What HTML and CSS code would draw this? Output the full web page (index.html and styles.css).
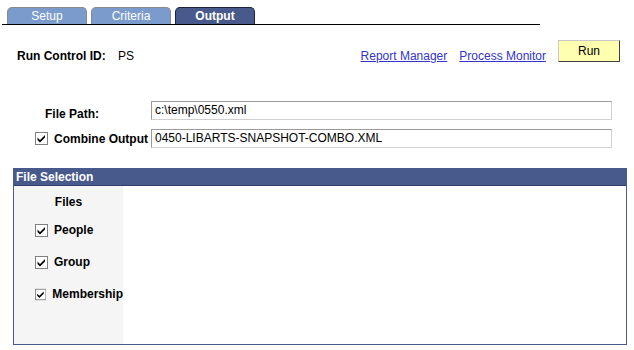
FILE: index.html
```html
<!DOCTYPE html>
<html lang="en">
<head>
    <meta charset="UTF-8">
    <title>Output</title>
    <link rel="stylesheet" href="styles.css">
</head>
<body>

    <div class="tabbar">
        <div class="tab">Setup</div>
        <div class="tab">Criteria</div>
        <div class="tab active">Output</div>
    </div>

    <div class="run-row">
        <span class="label run-label">Run Control ID:</span>
        <span class="value">PS</span>
        <a class="link" href="#">Report Manager</a>
        <a class="link" href="#">Process Monitor</a>
        <button class="run-btn">Run</button>
    </div>

    <div class="form">
        <div class="form-row">
            <span class="label path-label">File Path:</span>
            <div class="input">c:\temp\0550.xml</div>
        </div>
        <div class="form-row">
            <span class="check-label">
                <svg class="check" width="13" height="13" viewBox="0 0 13 13">
                    <rect x="0.5" y="0.5" width="12" height="12" fill="#fff" stroke="#808080"/>
                    <path d="M2.5 5.5 L5 8 L10 3 L10 5.5 L5 10.5 L2.5 8 Z" fill="#000"/>
                </svg>
                <span class="label">Combine Output</span>
            </span>
            <div class="input">0450-LIBARTS-SNAPSHOT-COMBO.XML</div>
        </div>
    </div>

    <div class="panel">
        <div class="panel-head">File Selection</div>
        <div class="panel-body">
            <div class="files-col">
                <div class="label files-title">Files</div>
                <div class="file-item">
                    <svg class="check" width="13" height="13" viewBox="0 0 13 13">
                        <rect x="0.5" y="0.5" width="12" height="12" fill="#fff" stroke="#808080"/>
                        <path d="M2.5 5.5 L5 8 L10 3 L10 5.5 L5 10.5 L2.5 8 Z" fill="#000"/>
                    </svg>
                    <span class="label">People</span>
                </div>
                <div class="file-item">
                    <svg class="check" width="13" height="13" viewBox="0 0 13 13">
                        <rect x="0.5" y="0.5" width="12" height="12" fill="#fff" stroke="#808080"/>
                        <path d="M2.5 5.5 L5 8 L10 3 L10 5.5 L5 10.5 L2.5 8 Z" fill="#000"/>
                    </svg>
                    <span class="label">Group</span>
                </div>
                <div class="file-item">
                    <svg class="check" width="13" height="13" viewBox="0 0 13 13">
                        <rect x="0.5" y="0.5" width="12" height="12" fill="#fff" stroke="#808080"/>
                        <path d="M2.5 5.5 L5 8 L10 3 L10 5.5 L5 10.5 L2.5 8 Z" fill="#000"/>
                    </svg>
                    <span class="label">Membership</span>
                </div>
            </div>
        </div>
    </div>

</body>
</html>
```

FILE: styles.css
```css
body {
    margin: 0;
    width: 634px;
    height: 350px;
    background: #fff;
    font-family: "Liberation Sans", Arial, sans-serif;
    font-size: 12px;
    color: #000;
}
.tabbar {
    display: flex;
    gap: 4px;
    margin-left: 2px;
    width: 538px;
    padding: 7px 0 0 5px;
    box-sizing: border-box;
    border-bottom: 1px solid #000;
}
.tab {
    width: 80px;
    height: 17px;
    box-sizing: border-box;
    border: 1px solid #8a8a8a;
    border-bottom: none;
    border-radius: 5px 5px 0 0;
    background: #7a9bcb;
    color: #fff;
    text-align: center;
    line-height: 16px;
}
.tab.active {
    background: #485a8c;
    border-color: #1c2240;
    font-weight: bold;
}
.label {
    font-weight: bold;
}
.run-row {
    display: flex;
    align-items: flex-end;
    margin-top: 15px;
    height: 23px;
    padding-left: 17px;
}
.run-label {
    width: 101px;
    line-height: 14px;
}
.value {
    line-height: 14px;
}
.link {
    color: #3333cc;
    line-height: 14px;
    margin-right: 12px;
}
.link:first-of-type {
    margin-left: auto;
}
.run-btn {
    width: 62px;
    height: 22px;
    margin: 0 14px 1px 0;
    padding: 0;
    background: #ffffb0;
    border: 1px solid;
    border-color: #c8c8c8 #404040 #404040 #c8c8c8;
    font-family: inherit;
    font-size: 12px;
    color: #000;
}
.form {
    display: flex;
    flex-direction: column;
    gap: 9px;
    margin-top: 38px;
}
.form-row {
    display: flex;
    align-items: center;
    height: 19px;
}
.path-label {
    width: 106px;
    padding-left: 45px;
    align-self: flex-end;
    line-height: 14px;
    margin-bottom: -1px;
}
.check-label {
    display: flex;
    align-items: center;
    gap: 6px;
    width: 116px;
    padding-left: 35px;
}
.check {
    display: block;
}
.input {
    width: 461px;
    height: 19px;
    box-sizing: border-box;
    border: 1px solid;
    border-color: #9a9a9a #d0d0d0 #d0d0d0 #9a9a9a;
    padding-left: 3px;
    line-height: 17px;
}
.panel {
    margin: 20px 0 0 13px;
    width: 614px;
    height: 177px;
    box-sizing: border-box;
    border: 1px solid #485a8c;
    display: flex;
    flex-direction: column;
}
.panel-head {
    height: 17px;
    box-sizing: border-box;
    background: #485a8c;
    border-bottom: 1px solid #2e3d6e;
    color: #fff;
    font-weight: bold;
    padding-left: 2px;
    line-height: 16px;
}
.panel-body {
    flex: 1;
    display: flex;
}
.files-col {
    width: 109px;
    background: #f5f5f5;
    display: flex;
    flex-direction: column;
}
.files-title {
    text-align: center;
    margin-top: 9px;
    line-height: 14px;
}
.file-item {
    display: flex;
    align-items: center;
    gap: 6px;
    padding-left: 21px;
    margin-top: 12px;
    height: 18px;
}
.file-item + .file-item {
    margin-top: 14px;
}
```
